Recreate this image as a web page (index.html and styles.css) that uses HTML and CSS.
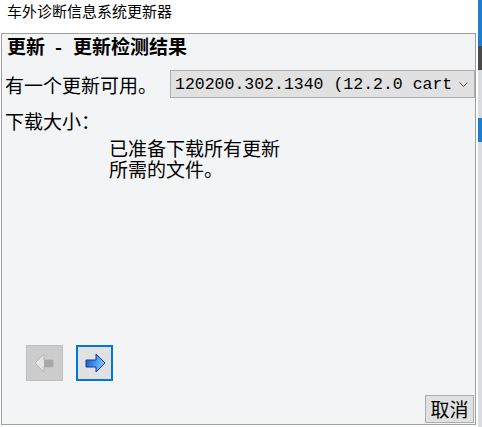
FILE: index.html
```html
<!DOCTYPE html>
<html lang="zh-CN">
<head>
<meta charset="UTF-8">
<meta name="viewport" content="width=device-width, initial-scale=1.0">
<title>车外诊断信息系统更新器</title>
<link rel="stylesheet" href="styles.css">
</head>
<body>
  <div class="window">
    <div class="titlebar">车外诊断信息系统更新器</div>

    <div class="panel">
      <h2 class="heading">更新<span class="dash">-</span>更新检测结果</h2>

      <div class="row">
        <span class="label">有一个更新可用。</span>
        <div class="combo">
          <span class="combo-text">120200.302.1340 (12.2.0 cart</span>
          <svg class="chevron" width="9" height="5" viewBox="0 0 9 5">
            <polyline points="0.5,0.5 4.5,4.5 8.5,0.5" fill="none" stroke="#444" stroke-width="1"/>
          </svg>
        </div>
      </div>

      <div class="label size">下载大小：</div>

      <p class="message">已准备下载所有更新<br>所需的文件。</p>

      <div class="nav">
        <button class="nav-btn back" disabled>
          <svg width="22" height="20" viewBox="0 0 22 20">
            <polygon points="10,1 1,10 10,19 10,14 19,14 19,7 10,7" fill="#e4e4e4" stroke="#b5b5b5" stroke-width="1"/>
            <rect x="10" y="7" width="9" height="7" fill="#a8a8a8"/>
          </svg>
        </button>
        <button class="nav-btn next">
          <svg width="22" height="20" viewBox="0 0 22 20">
            <defs>
              <linearGradient id="blue" x1="0" y1="0" x2="1" y2="0.3">
                <stop offset="0" stop-color="#1d4fa8"/>
                <stop offset="0.5" stop-color="#3f8ee6"/>
                <stop offset="1" stop-color="#7fc2ff"/>
              </linearGradient>
            </defs>
            <polygon points="12,1 21,10 12,19 12,14 2,14 2,7 12,7" fill="url(#blue)" stroke="#0b3fa8" stroke-width="1"/>
          </svg>
        </button>
      </div>

      <div class="footer">
        <button class="cancel">取消</button>
      </div>
    </div>
  </div>
  <div class="backdrop">
    <div class="bd-blue"></div>
    <div class="bd-dark"></div>
    <div class="bd-light"></div>
    <div class="bd-blue short"></div>
    <div class="bd-light grow"></div>
  </div>
</body>
</html>
```

FILE: styles.css
```css
body {
  margin: 0;
  padding: 0;
  display: flex;
  width: 482px;
  height: 427px;
  overflow: hidden;
  background: #fff;
  font-family: "Noto Sans CJK SC", sans-serif;
  color: #000;
}

.window {
  width: 478px;
  height: 427px;
  background: #fff;
}

.titlebar {
  height: 33px;
  padding: 0 7px;
  box-sizing: border-box;
  font-size: 15px;
  line-height: 21px;
}

.panel {
  margin-left: 1px;
  width: 475px;
  height: 392px;
  box-sizing: border-box;
  border: 1px solid #a0a0a0;
  background: #f3f4f6;
  padding: 0 0 0 3px;
  display: flex;
  flex-direction: column;
}

.heading {
  margin: 0 0 0 2px;
  font-size: 19px;
  line-height: 24px;
  font-weight: bold;
}

.dash {
  margin: 0 11px 0 10px;
}

.row {
  margin-top: 12px;
  display: flex;
  align-items: center;
  justify-content: space-between;
  height: 28px;
}

.label {
  font-size: 19px;
  line-height: 21px;
}

.combo {
  width: 305px;
  height: 28px;
  box-sizing: border-box;
  border: 1px solid #adadad;
  background: #e1e1e1;
  display: flex;
  align-items: center;
  padding-left: 4px;
  overflow: hidden;
}

.combo-text {
  flex: 1;
  font-family: "Liberation Mono", monospace;
  font-size: 16.5px;
  white-space: nowrap;
  overflow: hidden;
}

.chevron {
  margin: 0 6px 0 2px;
}

.size {
  margin-top: 12px;
}

.message {
  margin: 6px 0 0 104px;
  font-size: 19px;
  line-height: 21px;
}

.nav {
  margin-top: auto;
  margin-left: 21px;
  display: flex;
  gap: 13px;
}

.nav-btn {
  width: 37px;
  height: 36px;
  box-sizing: border-box;
  padding: 0;
  display: flex;
  align-items: center;
  justify-content: center;
}

.back {
  background: #cccccc;
  border: 1px solid #bfbfbf;
}

.next {
  background: #e1e1e1;
  border: 2px solid #0078d7;
}

.footer {
  margin-top: 14px;
  margin-bottom: 1px;
  display: flex;
  justify-content: flex-end;
  padding-right: 1px;
}

.cancel {
  width: 49px;
  height: 28px;
  box-sizing: border-box;
  border: 1px solid #adadad;
  background: #e1e1e1;
  padding: 0;
  font-family: "Noto Sans CJK SC", sans-serif;
  font-size: 19px;
  line-height: 24px;
  color: #000;
}

.backdrop {
  width: 4px;
  height: 427px;
  display: flex;
  flex-direction: column;
}

.bd-blue {
  height: 46px;
  background: #1b7fd1;
}

.bd-blue.short {
  height: 24px;
}

.bd-dark {
  height: 24px;
  background: #4a4a4a;
}

.bd-light {
  height: 48px;
  background: #d9dde2;
}

.bd-light.grow {
  flex: 1;
}
```
